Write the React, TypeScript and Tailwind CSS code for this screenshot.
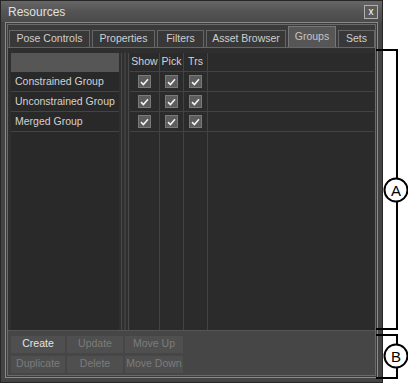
import React from 'react';

const font = { fontFamily: '"Liberation Sans", Arial, sans-serif' };

const tabs = [
  { label: 'Pose Controls', w: 'w-[81px]' },
  { label: 'Properties', w: 'w-[63px]' },
  { label: 'Filters', w: 'w-[47px]' },
  { label: 'Asset Browser', w: 'w-[80px]' },
  { label: 'Groups', w: 'w-[48px]', active: true },
  { label: 'Sets', w: 'w-[37px]' },
];

const groups = ['Constrained Group', 'Unconstrained Group', 'Merged Group'];

function Check() {
  return (
    <div className="flex h-[13px] w-[13px] items-center justify-center border border-[#7a7a7a] bg-[#5c5c5c]">
      <svg width="9" height="8" viewBox="0 0 9 8">
        <path d="M1 4.2 L3.4 6.5 L8 1.3" fill="none" stroke="#f2f2f2" strokeWidth="1.6" />
      </svg>
    </div>
  );
}

function Btn({ label, on }: { label: string; on?: boolean }) {
  return (
    <div
      className={`flex h-[17px] items-center justify-center whitespace-nowrap bg-[#4f4f4f] text-[10.5px] ${
        on ? 'text-[#e4e4e4]' : 'text-[#7c7c7c]'
      }`}
    >
      {label}
    </div>
  );
}

function Annotations() {
  return (
    <svg className="absolute left-0 top-0" width="408" height="383" viewBox="0 0 408 383">
      <g stroke="#000" strokeWidth="2" fill="none">
        <path d="M376 50 H397 V329 H376" />
        <path d="M376 335 H397 V378 H376" />
      </g>
      <circle cx="396" cy="190" r="11.5" fill="#fff" stroke="#000" strokeWidth="2" />
      <circle cx="396" cy="356" r="11.5" fill="#fff" stroke="#000" strokeWidth="2" />
      <text x="396" y="195.5" textAnchor="middle" fontSize="15" fontFamily="Liberation Sans, Arial, sans-serif">A</text>
      <text x="396" y="361.5" textAnchor="middle" fontSize="15" fontFamily="Liberation Sans, Arial, sans-serif">B</text>
    </svg>
  );
}

export default function App() {
  return (
    <div className="relative h-[383px] w-[408px] overflow-hidden bg-white" style={font}>
      <div className="flex h-[383px] w-[383px] flex-col border border-[#262626] bg-[#444]">
        {/* title bar */}
        <div className="flex h-[21px] shrink-0 items-center justify-between bg-gradient-to-b from-[#666] via-[#545454] to-[#4a4a4a] pl-[7px] pr-[4px]">
          <span className="text-[12px] text-[#e0e0e0]">Resources</span>
          <div className="flex h-[14px] w-[14px] items-center justify-center border border-[#b0b0b0] bg-[#5a5a5a] text-[10px] leading-none text-white">
            x
          </div>
        </div>

        {/* frame */}
        <div className="mx-[4px] mb-[4px] flex flex-1 flex-col border border-[#8a8a8a] bg-[#3c3c3c] p-[1px]">
          <div className="flex flex-1 flex-col border border-[#6a6a6a] bg-[#3a3a3a]">
            {/* tabs */}
            <div className="flex h-[22px] items-end gap-[2px] pl-[1px] pt-[2px]">
              {tabs.map((t) =>
                t.active ? (
                  <div
                    key={t.label}
                    className={`${t.w} flex h-[21px] items-center justify-center whitespace-nowrap border-x border-t border-[#777] bg-[#565656] text-[10.5px] text-[#c4c4c4]`}
                  >
                    {t.label}
                  </div>
                ) : (
                  <div
                    key={t.label}
                    className={`${t.w} flex h-[17px] items-center justify-center whitespace-nowrap border-x border-t border-[#666] bg-[#383838] text-[10.5px] text-[#cfcfcf]`}
                  >
                    {t.label}
                  </div>
                )
              )}
            </div>

            {/* content */}
            <div className="flex flex-1 border-t border-[#666] bg-[#2f2f2f] pt-[5px] pl-[3px] pr-[1px]">
              {/* list */}
              <div className="flex w-[108px] flex-col bg-[#292929]">
                <div className="h-[19px] bg-[#565656]" />
                {groups.map((g) => (
                  <div
                    key={g}
                    className="flex h-[20px] items-center whitespace-nowrap border-b border-[#444] pl-[4px] text-[10.5px] text-[#d2d2d2]"
                  >
                    {g}
                  </div>
                ))}
              </div>
              {/* splitter */}
              <div className="flex w-[11px] justify-center gap-[2px] bg-[#2f2f2f]">
                <div className="w-[1px] bg-[#4a4a4a]" />
                <div className="w-[2px] bg-[#3e3e3e]" />
                <div className="w-[1px] bg-[#4a4a4a]" />
              </div>
              {/* table */}
              <div className="flex flex-1 bg-[#2b2b2b]">
                {[
                  { h: 'Show', w: 'w-[30px]' },
                  { h: 'Pick', w: 'w-[24px]' },
                  { h: 'Trs', w: 'w-[24px]' },
                ].map((c) => (
                  <div key={c.h} className={`${c.w} flex flex-col border-r border-[#434343]`}>
                    <div className="flex h-[19px] items-center justify-center whitespace-nowrap border-b border-[#434343] text-[10.5px] text-[#d4d4d4]">
                      {c.h}
                    </div>
                    {groups.map((g) => (
                      <div key={g} className="flex h-[20px] items-center justify-center border-b border-[#434343]">
                        <Check />
                      </div>
                    ))}
                  </div>
                ))}
                <div className="flex flex-1 flex-col">
                  <div className="h-[19px] border-b border-[#434343]" />
                  {groups.map((g) => (
                    <div key={g} className="h-[20px] border-b border-[#434343]" />
                  ))}
                </div>
              </div>
            </div>

            {/* buttons */}
            <div className="grid h-[45px] grid-cols-[54px_56px_58px] content-center gap-x-[2px] gap-y-[3px] border-t border-[#555] bg-[#464646] pl-[3px] pt-[2px]">
              <Btn label="Create" on />
              <Btn label="Update" />
              <Btn label="Move Up" />
              <Btn label="Duplicate" />
              <Btn label="Delete" />
              <Btn label="Move Down" />
            </div>
          </div>
        </div>
      </div>
      <Annotations />
    </div>
  );
}
